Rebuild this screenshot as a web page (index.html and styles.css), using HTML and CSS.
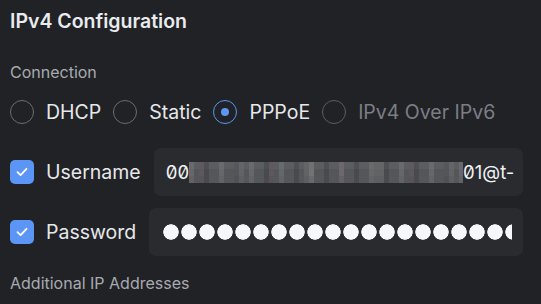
FILE: index.html
```html
<!DOCTYPE html>
<html lang="en">

<head>
    <meta charset="UTF-8">
    <meta name="viewport" content="width=device-width, initial-scale=1.0">
    <title>IPv4 Configuration</title>
    <link rel="stylesheet" href="styles.css">
</head>

<body>

    <div class="panel">
        <h1 class="title">IPv4 Configuration</h1>

        <!-- Connection type -->
        <p class="section-label">Connection</p>
        <div class="radio-row">
            <label class="radio">
                <span class="radio-circle"></span>
                <span class="radio-text">DHCP</span>
            </label>
            <label class="radio">
                <span class="radio-circle"></span>
                <span class="radio-text">Static</span>
            </label>
            <label class="radio checked">
                <span class="radio-circle"></span>
                <span class="radio-text">PPPoE</span>
            </label>
            <label class="radio disabled">
                <span class="radio-circle"></span>
                <span class="radio-text">IPv4 Over IPv6</span>
            </label>
        </div>

        <!-- PPPoE credentials -->
        <div class="field-row">
            <span class="checkbox">
                <svg width="14" height="14" viewBox="0 0 14 14"><polyline points="2.5,7.2 5.6,10.2 11.5,3.8" fill="none" stroke="#fff" stroke-width="1.8" stroke-linecap="round" stroke-linejoin="round"/></svg>
            </span>
            <span class="field-label">Username</span>
            <div class="field-input">
                <span class="value">00<span class="mosaic"></span>01@t-</span>
            </div>
        </div>

        <div class="field-row">
            <span class="checkbox">
                <svg width="14" height="14" viewBox="0 0 14 14"><polyline points="2.5,7.2 5.6,10.2 11.5,3.8" fill="none" stroke="#fff" stroke-width="1.8" stroke-linecap="round" stroke-linejoin="round"/></svg>
            </span>
            <span class="field-label">Password</span>
            <div class="field-input password">
                <span class="dots"></span>
            </div>
        </div>

        <p class="section-label extra">Additional IP Addresses</p>
    </div>

</body>

</html>
```

FILE: styles.css
```css
/* General Reset */
* {
    margin: 0;
    padding: 0;
    box-sizing: border-box;
}

body {
    font-family: Inter, "Noto Sans", sans-serif;
    background-color: #212225;
    color: #e6e8eb;
    overflow: hidden;
}

.panel {
    padding: 9px 18px 0 10px;
}

.title {
    font-size: 19.5px;
    line-height: 24px;
    font-weight: 600;
    color: #e9ebee;
}

.section-label {
    margin-top: 29px;
    font-size: 16px;
    line-height: 20px;
    color: #a7abb1;
}

/* Radio buttons */
.radio-row {
    display: flex;
    align-items: center;
    gap: 12px;
    margin-top: 18px;
}

.radio {
    display: flex;
    align-items: center;
    gap: 12px;
}

.radio-circle {
    width: 24px;
    height: 24px;
    border-radius: 50%;
    border: 1.5px solid #6a6d73;
    display: flex;
    align-items: center;
    justify-content: center;
}

.radio-text {
    font-size: 19.5px;
    line-height: 24px;
    color: #e6e8eb;
}

.radio.checked .radio-circle {
    border-color: #5b95f5;
}

.radio.checked .radio-circle::after {
    content: "";
    width: 8px;
    height: 8px;
    border-radius: 50%;
    background-color: #5b95f5;
}

.radio.disabled .radio-circle {
    border-color: #5a5d63;
}

.radio.disabled .radio-text {
    color: #7b7e85;
}

/* Checkbox + input rows */
.field-row {
    display: flex;
    align-items: center;
    gap: 12px;
    margin-top: 24px;
}

.field-row + .field-row {
    margin-top: 12px;
}

.checkbox {
    width: 24px;
    height: 24px;
    border-radius: 5px;
    background-color: #5b95f5;
    display: flex;
    align-items: center;
    justify-content: center;
    flex-shrink: 0;
}

.field-label {
    font-size: 19.5px;
    line-height: 24px;
    color: #e6e8eb;
    margin-right: 1px;
}

.field-input {
    flex: 1;
    height: 48px;
    border-radius: 7px;
    background-color: #2a2b2e;
    padding: 0 6px 0 12px;
    display: flex;
    align-items: center;
    overflow: hidden;
}

.value {
    display: block;
    width: 100%;
    white-space: nowrap;
    font-size: 18.5px;
    line-height: 24px;
    font-feature-settings: "zero" 1;
    color: #f0f2f5;
}

/* blurred part of the username */
.mosaic {
    display: inline-block;
    width: 274px;
    height: 21px;
    vertical-align: -4px;
    background-color: #5c5d62;
    background-image:
        linear-gradient(180deg, rgba(0, 0, 0, 0.12) 0 7px, transparent 7px 14px, rgba(0, 0, 0, 0.18) 14px),
        repeating-linear-gradient(90deg, rgba(255, 255, 255, 0.10) 0 5px, transparent 5px 15px, rgba(0, 0, 0, 0.14) 15px 20px, transparent 20px 30px),
        repeating-linear-gradient(90deg, transparent 0 10px, rgba(120, 90, 100, 0.25) 10px 15px, transparent 15px 45px, rgba(140, 150, 140, 0.22) 45px 55px, transparent 55px 70px),
        repeating-linear-gradient(180deg, rgba(255, 255, 255, 0.08) 0 7px, rgba(0, 0, 0, 0.08) 7px 14px);
}

.password {
    padding: 0 11px 0 14px;
}

.dots {
    display: block;
    width: 100%;
    height: 16px;
    background-image: radial-gradient(circle at 8px 8px, #f5f7fa 7.4px, transparent 8px);
    background-size: 18px 16px;
    background-repeat: repeat-x;
}

.extra {
    margin-top: 17px;
}
```
